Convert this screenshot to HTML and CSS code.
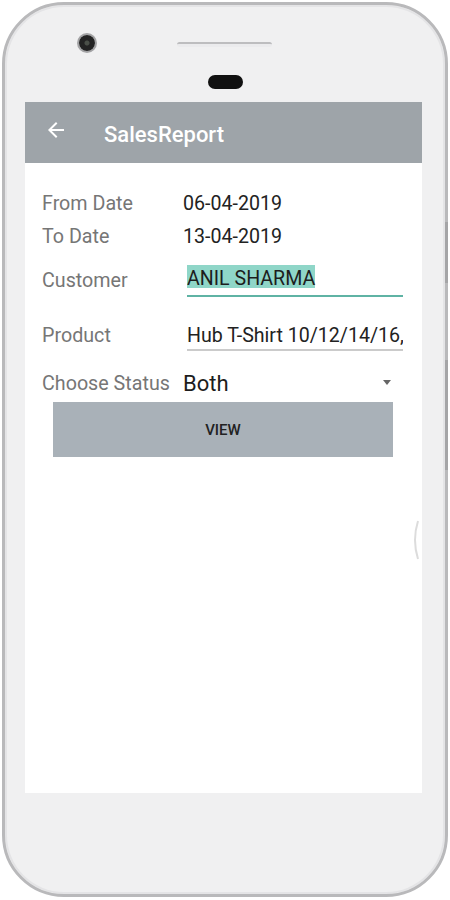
FILE: index.html
```html
<!DOCTYPE html>
<html lang="en">
<head>
    <meta charset="UTF-8">
    <meta name="viewport" content="width=device-width, initial-scale=1.0">
    <title>SalesReport</title>
    <link rel="stylesheet" href="styles.css">
</head>
<body>
  <div class="phone">
    <span class="side-key key-top"></span>
    <span class="side-key key-low"></span>
    <div class="bezel-top">
      <div class="bezel-row">
        <span class="camera"></span>
        <span class="speaker"></span>
      </div>
      <span class="sensor"></span>
    </div>

    <div class="screen">
      <header class="appbar">
        <svg class="back" viewBox="0 0 24 24" width="24" height="24">
          <path d="M20 11H7.83l5.59-5.59L12 4l-8 8 8 8 1.41-1.41L7.83 13H20v-2z" fill="#fff"/>
        </svg>
        <h1 class="title">SalesReport</h1>
      </header>

      <div class="form">
        <div class="row">
          <span class="label">From Date</span>
          <span class="value">06-04-2019</span>
        </div>
        <div class="row row-to">
          <span class="label">To Date</span>
          <span class="value">13-04-2019</span>
        </div>
        <div class="row row-customer">
          <span class="label">Customer</span>
          <div class="field field-active">
            <span class="selected">ANIL SHARMA</span>
          </div>
        </div>
        <div class="row row-product">
          <span class="label">Product</span>
          <div class="field">Hub T-Shirt 10/12/14/16,</div>
        </div>
        <div class="row row-status">
          <span class="label">Choose Status</span>
          <div class="spinner">
            <span class="spinner-text">Both</span>
            <svg class="caret" viewBox="0 0 8 5" width="8" height="5">
              <polygon points="0,0 8,0 4,5" fill="#666"/>
            </svg>
          </div>
        </div>
        <button class="view-btn" type="button">VIEW</button>
      </div>

      <svg class="edge-arc" viewBox="0 0 8 40" width="8" height="40">
        <path d="M7 1 Q1 20 7 39" fill="none" stroke="#dcdcdc" stroke-width="2"/>
      </svg>
    </div>
  </div>
</body>
</html>
```

FILE: styles.css
```css
* {
  box-sizing: border-box;
}
body {
  margin: 0;
  background: #fff;
  font-family: Roboto, "Noto Sans", sans-serif;
  overflow: hidden;
}
.phone {
  position: relative;
  width: 446px;
  height: 895px;
  margin: 2px;
  border: 3px solid #b9b9bb;
  border-radius: 62px;
  background: #f0f0f1;
  box-shadow: inset 0 0 0 2px #e4e4e6;
}
.side-key {
  position: absolute;
  right: -3px;
  width: 3px;
  background: #a5a5a7;
}
.key-top {
  top: 217px;
  height: 61px;
}
.key-low {
  top: 355px;
  height: 110px;
}

/* top bezel */
.bezel-top {
  height: 97px;
  padding-top: 30px;
}
.bezel-row {
  display: flex;
  align-items: center;
  height: 16px;
  padding-left: 74px;
}
.camera {
  width: 16px;
  height: 16px;
  border-radius: 50%;
  background: radial-gradient(circle at 50% 50%, #4a4f48 0 2px, #232323 3px);
  box-shadow: 0 0 0 2px #a3a3a5;
}
.speaker {
  width: 95px;
  height: 5px;
  margin-left: 82px;
  margin-top: 2px;
  border-radius: 3px;
  background: #ebebed;
  border-top: 2px solid #bdbdbf;
}
.sensor {
  display: block;
  width: 35px;
  height: 14px;
  margin: 24px auto 0;
  border-radius: 7px;
  background: #111;
}

/* screen */
.screen {
  position: relative;
  width: 397px;
  height: 691px;
  margin-left: 20px;
  background: #fff;
}
.appbar {
  display: flex;
  align-items: center;
  height: 61px;
  padding-left: 19px;
  background: #9ea4a9;
}
.back {
  margin-top: -5px;
}
.title {
  margin: 3px 0 0 36px;
  font-size: 22px;
  font-weight: 500;
  color: #fff;
}

.form {
  padding: 29px 0 0 17px;
}
.row {
  display: flex;
  align-items: flex-start;
}
.label {
  width: 141px;
  flex: none;
  font-size: 19.7px;
  line-height: 23px;
  color: #767676;
}
.value {
  font-size: 19.6px;
  line-height: 23px;
  color: #222;
}
.row-to {
  margin-top: 10px;
}
.row-customer {
  margin-top: 17px;
}
.row-customer .label {
  margin-top: 4px;
}
.field {
  display: flex;
  width: 216px;
  margin-left: 4px;
  font-size: 19.6px;
  line-height: 23px;
  color: #222;
  white-space: nowrap;
  overflow: hidden;
  padding-bottom: 2px;
  border-bottom: 2px solid #cbcbcb;
}
.field-active {
  padding-bottom: 7px;
  border-bottom-color: #5fb3a4;
}
.selected {
  height: 23px;
  padding-top: 4px;
  line-height: 19px;
  background: #8fd6c8;
  color: #1d1d1d;
}
.row-product {
  margin-top: 27px;
}
.row-status {
  margin-top: 21px;
}
.spinner {
  display: flex;
  align-items: center;
  width: 208px;
}
.spinner-text {
  flex: 1;
  font-size: 22px;
  line-height: 23px;
  color: #1d1d1d;
}
.caret {
  margin-top: -2px;
}
.view-btn {
  display: block;
  width: 340px;
  height: 55px;
  margin: 7px 0 0 11px;
  border: none;
  border-radius: 0;
  background: #a9b1b8;
  font-family: Roboto, "Noto Sans", sans-serif;
  font-size: 15px;
  font-weight: 500;
  color: #222;
}
.edge-arc {
  position: absolute;
  right: 3px;
  top: 418px;
}
```
